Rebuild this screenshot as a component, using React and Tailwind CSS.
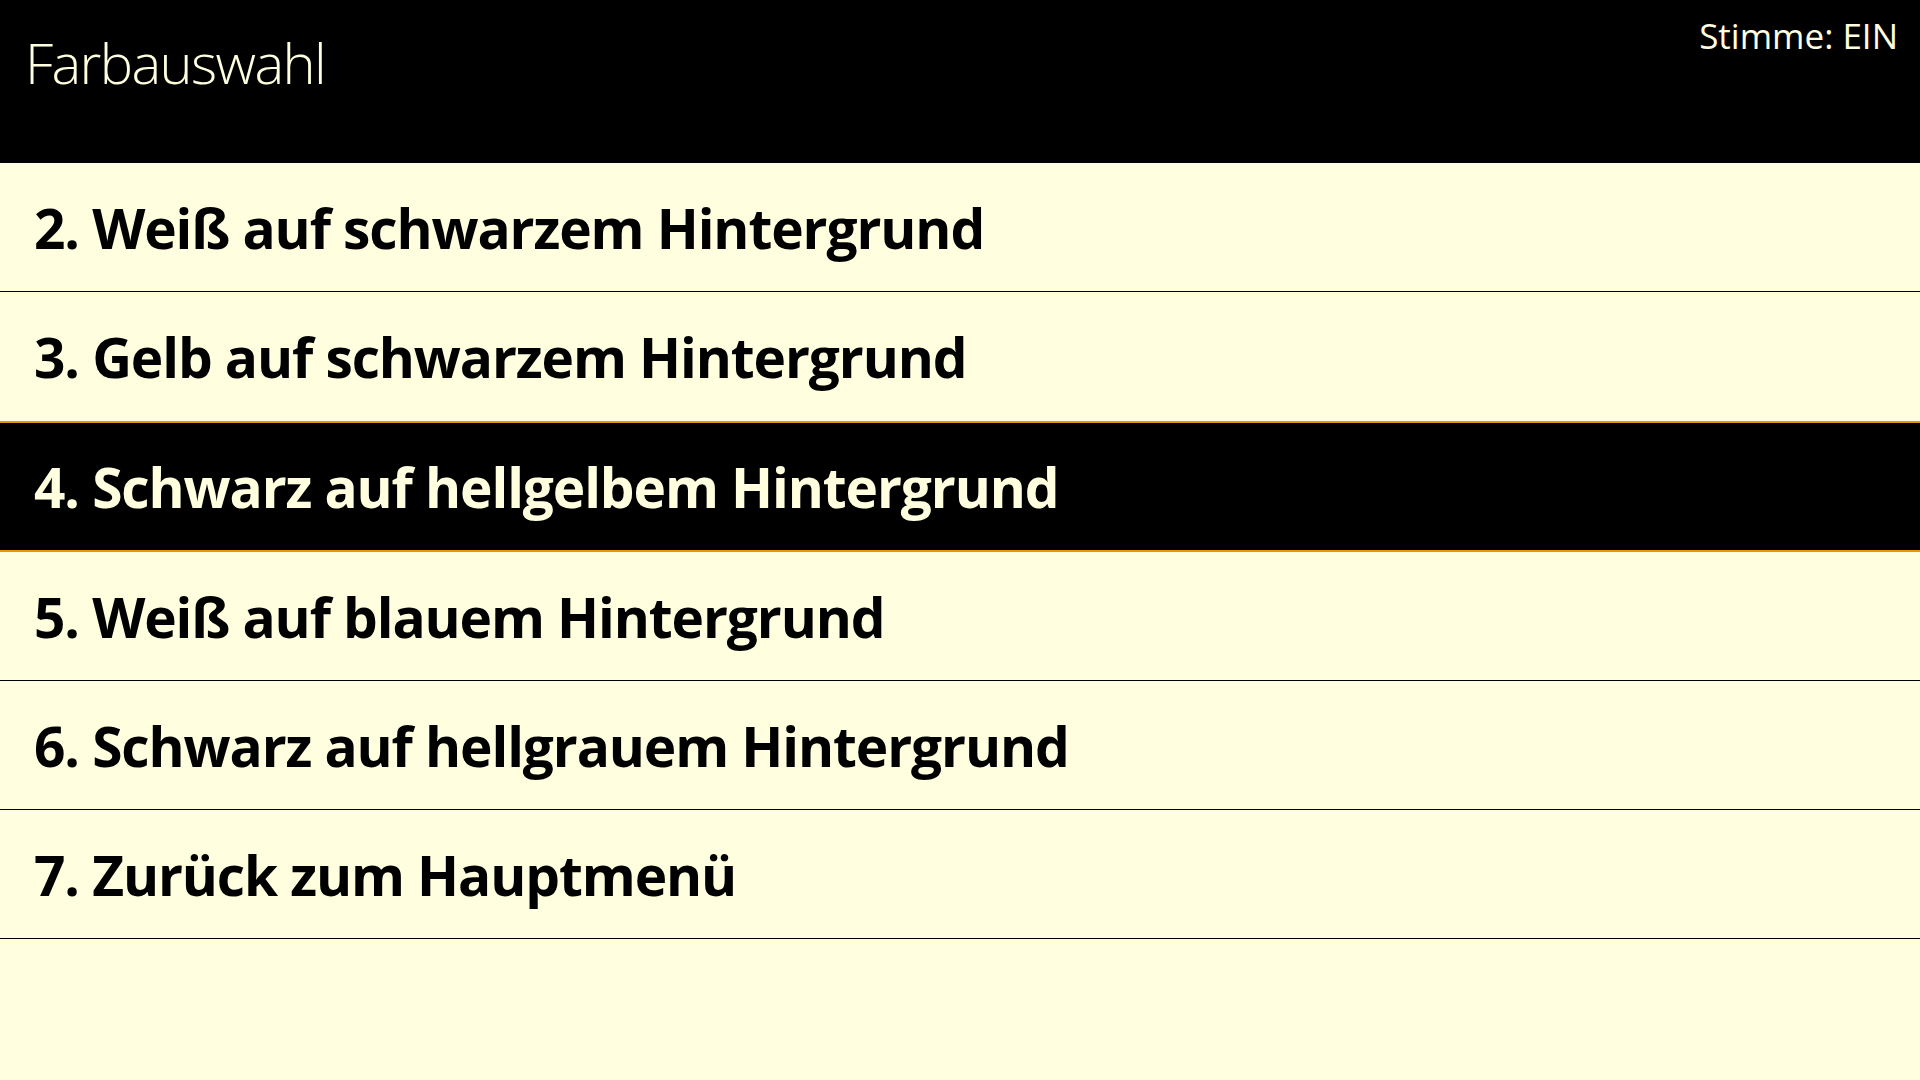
const items = [
  { n: 2, label: 'Weiß auf schwarzem Hintergrund' },
  { n: 3, label: 'Gelb auf schwarzem Hintergrund', beforeActive: true },
  { n: 4, label: 'Schwarz auf hellgelbem Hintergrund', active: true },
  { n: 5, label: 'Weiß auf blauem Hintergrund' },
  { n: 6, label: 'Schwarz auf hellgrauem Hintergrund' },
  { n: 7, label: 'Zurück zum Hauptmenü' },
];

export default function App() {
  return (
    <div className="w-[1920px] h-[1080px] overflow-hidden bg-[#ffffe0] font-['Open_Sans',sans-serif]">
      <header className="h-[163px] bg-black flex justify-between items-start">
        <h1 className="pl-[25px] pt-[34px] text-[56px] font-light leading-none text-[#ffffe0] tracking-[-1.6px]">
          Farbauswahl
        </h1>
        <span className="pr-[22px] pt-[18px] text-[35px] leading-none text-[#ffffe0]">Stimme: EIN</span>
      </header>
      <ul>
        {items.map(it => (
          <li
            key={it.n}
            className={`flex items-center pl-[34px] text-[55px] font-bold leading-none tracking-[-1.1px] ${
              it.active
                ? 'h-[131px] bg-black text-[#ffffe0] border-y-2 border-[#e39a00]'
                : it.beforeActive
                ? 'h-[129px] text-black'
                : 'h-[129px] text-black border-b border-black'
            }`}
          >
            {it.n}. {it.label}
          </li>
        ))}
      </ul>
    </div>
  );
}
